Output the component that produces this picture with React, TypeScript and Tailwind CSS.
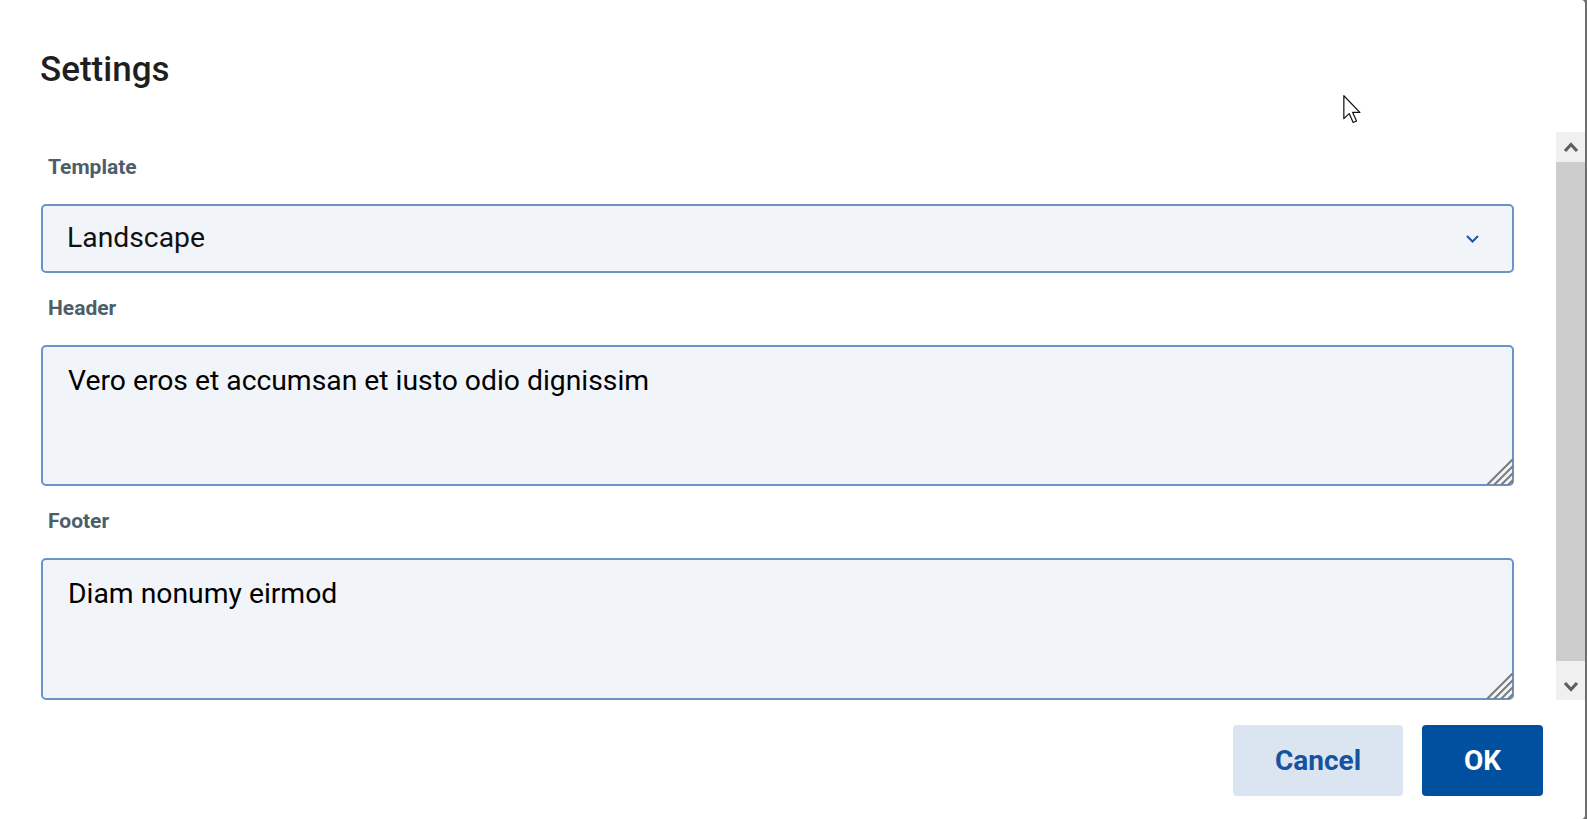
import { useState } from 'react';

const font = { fontFamily: 'Roboto, "Noto Sans", sans-serif' };

function Label({ children }: { children: string }) {
  return (
    <div className="pl-[7px] pt-[21px] pb-[23px] text-[21px] leading-[28px] font-bold text-[#4d5e69]">
      {children}
    </div>
  );
}

function Resizer() {
  return (
    <svg
      className="absolute right-[1px] bottom-[1px] pointer-events-none"
      width="26"
      height="26"
      viewBox="0 0 26 26"
    >
      <g stroke="#7a7a7a" strokeWidth="2">
        <line x1="0" y1="26" x2="26" y2="0" />
        <line x1="7" y1="26" x2="26" y2="7" />
        <line x1="14" y1="26" x2="26" y2="14" />
        <line x1="21" y1="26" x2="26" y2="21" />
      </g>
    </svg>
  );
}

function Area({ value, h }: { value: string; h: string }) {
  const [text, setText] = useState(value);
  return (
    <div className={`relative ${h}`}>
      <textarea
        value={text}
        onChange={(e) => setText(e.target.value)}
        className="w-full h-full resize-none rounded-[5px] border-2 border-[#6a94c5] bg-[#f1f5fa] pl-[25px] pr-[24px] pt-[18px] text-[28.3px] leading-[32px] text-black outline-none"
        style={font}
      />
      <Resizer />
    </div>
  );
}

function ScrollArrow({ up }: { up?: boolean }) {
  return (
    <svg width="16" height="12" viewBox="0 0 16 12">
      <path
        d={up ? 'M2 10 L8 3.5 L14 10' : 'M2 2 L8 8.5 L14 2'}
        fill="none"
        stroke="#5f5f5f"
        strokeWidth="3.2"
      />
    </svg>
  );
}

export default function App() {
  return (
    <div className="w-full h-[819px] bg-[#6e6e6e] overflow-hidden" style={font}>
      <div className="relative w-[1585px] h-[819px] bg-white rounded-r-[4px] flex flex-col">
        {/* mouse pointer */}
        <svg className="absolute left-[1343px] top-[95px]" width="20" height="29" viewBox="0 0 13 19">
          <path
            d="M0.5 0.5 L0.5 15.5 L4 12.2 L6.6 18 L8.8 17 L6.3 11.4 L11 11.4 Z"
            fill="white"
            stroke="#111"
            strokeWidth="0.8"
            strokeLinejoin="round"
          />
        </svg>

        <div className="h-[132px] pl-[40px] pt-[50px]">
          <h1 className="text-[35px] leading-[40px] font-medium text-[#1f1f1f]">Settings</h1>
        </div>

        <div className="flex h-[568px]">
          <div className="flex-1 pl-[41px] pr-[42px]">
            <Label>Template</Label>
            <div className="h-[69px] rounded-[5px] border-2 border-[#6a94c5] bg-[#f1f5fa] flex items-center justify-between pl-[24px] pr-[33px]">
              <span className="text-[28.3px] text-[#111]">Landscape</span>
              <svg width="13" height="8" viewBox="0 0 13 8">
                <path d="M1 1 L6.5 6.5 L12 1" fill="none" stroke="#1b56a3" strokeWidth="2" />
              </svg>
            </div>

            <Label>Header</Label>
            <Area value="Vero eros et accumsan et iusto odio dignissim" h="h-[141px]" />

            <Label>Footer</Label>
            <Area value="Diam nonumy eirmod" h="h-[142px]" />
          </div>

          <div className="w-[29px] flex flex-col">
            <div className="h-[30px] bg-[#f0f0f0] flex items-center justify-center">
              <ScrollArrow up />
            </div>
            <div className="flex-1 bg-[#cdcdcd]" />
            <div className="h-[39px] bg-[#f0f0f0] flex justify-center pt-[20px]">
              <ScrollArrow />
            </div>
          </div>
        </div>

        <div className="flex justify-end gap-[19px] pt-[25px] pr-[42px]">
          <button className="w-[170px] h-[71px] rounded-[4px] bg-[#dae5f1] text-[28px] font-bold text-[#17529f]">
            Cancel
          </button>
          <button className="w-[121px] h-[71px] rounded-[4px] bg-[#00509f] text-[28px] font-bold text-white">
            OK
          </button>
        </div>
      </div>
    </div>
  );
}
